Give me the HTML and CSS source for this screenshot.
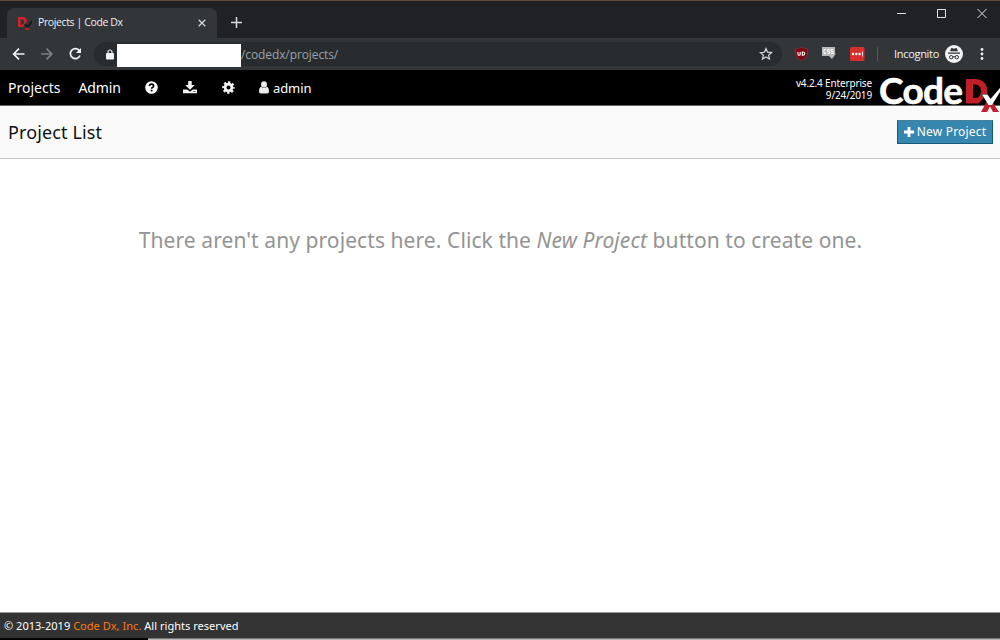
FILE: index.html
```
<!DOCTYPE html>
<html lang="en">
<head>
<meta charset="utf-8">
<title>Projects | Code Dx</title>
<link rel="stylesheet" href="styles.css">
</head>
<body>
<div class="window">
  <div class="tabstrip">
    <div class="tab">
      <svg class="favicon" width="14" height="14" viewBox="0 0 14 14"><path fill="#d2222c" fill-rule="evenodd" d="M0 0h4.500Q9 0 9 4.700L6.500 7.500 5 10H0zM2.500 2.300v5.400h1.500Q6.300 7.500 6.300 5T4 2.300z"/><path d="M7 7l2.500 3L14 4" fill="none" stroke="#17191b" stroke-width="2"/><path d="M6.500 13L9 10l3 3z" fill="#b91d26"/></svg>
      <span class="tab-title">Projects | Code Dx</span>
      <svg class="tab-close" width="8" height="8" viewBox="0 0 8 8"><path d="M.7.7l6.600 6.600M7.300.7L.7 7.300" stroke="#d5d7d9" stroke-width="1.300"/></svg>
    </div>
    <svg class="new-tab" width="11" height="11" viewBox="0 0 11 11"><path d="M5.500 0v11M0 5.500h11" stroke="#dadcde" stroke-width="1.500"/></svg>
    <svg class="window-controls" width="92" height="12" viewBox="0 0 92 12"><path d="M0 5.500h9M40.500 1.500h8v8h-8zM80.500 1l9 9M89.500 1l-9 9" fill="none" stroke="#e4e4e4"/></svg>
  </div>
  <div class="toolbar">
    <svg class="browser-nav" width="72" height="16" viewBox="0 0 72 16" fill="none" stroke-width="1.700"><path d="M12.500 8H2M7 2.700L1.700 8 7 13.300" stroke="#f1f3f4"/><path d="M29 8h10.500M34.500 2.700L39.800 8l-5.300 5.300" stroke="#7d8083"/><path d="M67.500 4.700A5 5 0 1 0 68 9.500" stroke="#f1f3f4"/><path d="M69 2v5h-5z" fill="#f1f3f4"/></svg>
    <div class="address">
      <svg class="lock" width="8" height="11" viewBox="0 0 8 11"><rect y="4" width="8" height="6.500" rx="1" fill="#f1f3f4"/><path d="M2 4.500V3a2 2 0 0 1 4 0v1.500" fill="none" stroke="#f1f3f4" stroke-width="1.200"/></svg>
      <span class="redacted"></span>
      <span class="url">/codedx/projects/</span>
      <svg class="star" width="14" height="14" viewBox="0 0 14 14"><path d="M7 1.500l1.600 3.700 4 .35-3 2.650.9 3.900L7 10l-3.500 2.100.9-3.900-3-2.650 4-.35z" fill="none" stroke="#d5d7d9" stroke-width="1.200"/></svg>
    </div>
    <svg class="ext-shield" width="13" height="14" viewBox="0 0 13 14"><path d="M6.500 0Q9 1.700 12.500 1.800V7q-.5 4-6 7Q1 11 .5 7V1.800Q4 1.700 6.500 0z" fill="#800610" stroke="#6d4a4e" stroke-width=".6"/><path d="M3 5v2.200q0 1 1.100 1t1.100-1V5M7.300 5v3.200h.8q1.700-.2 1.700-1.600T8.100 5z" fill="none" stroke="#fff" stroke-width="1.100"/></svg>
    <svg class="ext-css" width="14" height="13" viewBox="0 0 14 13"><path d="M0 0h13v6.500h1L10 12 7 9H0z" fill="#b9b9b9"/><path d="M4 2.600H2v3.800h2M7.800 2.600H5.700v1.900h2v1.900H5.500M11.300 2.600H9.200v1.900h2v1.900H9" fill="none" stroke="#fff"/></svg>
    <svg class="ext-pass" width="15" height="14" viewBox="0 0 15 14"><rect width="14.500" height="14" rx="1.500" fill="#d92f2c"/><g fill="#fff"><circle cx="3" cy="7" r="1.200"/><circle cx="6.300" cy="7" r="1.200"/><circle cx="9.600" cy="7" r="1.200"/><path d="M12 4.500h.8v5H12z"/></g></svg>
    <span class="divider"></span>
    <span class="incognito">Incognito</span>
    <svg class="incognito-icon" width="18" height="18" viewBox="0 0 18 18"><circle cx="9" cy="9" r="9" fill="#f1f3f4"/><path d="M6 3.500q.5-.7 1.500-.2.800.4 1.500.4t1.500-.4q1-.5 1.500.2l.9 2.800H5.100zM3 7.600h12v1.100H3z" fill="#303236"/><g fill="none" stroke="#303236"><circle cx="6.200" cy="12.200" r="1.700"/><circle cx="11.800" cy="12.200" r="1.700"/><path d="M8 12q1-.6 2 0"/></g></svg>
    <svg class="menu-dots" width="4" height="14" viewBox="0 0 4 14" fill="#f1f3f4"><circle cx="2" cy="2.500" r="1.400"/><circle cx="2" cy="7" r="1.400"/><circle cx="2" cy="11.500" r="1.400"/></svg>
  </div>
  <nav class="navbar">
    <span class="nav-link nav-projects">Projects</span>
    <span class="nav-link nav-admin">Admin</span>
    <svg class="nav-help" width="13" height="13" viewBox="0 0 13 13"><circle cx="6.500" cy="6.500" r="6.300" fill="#fff"/><path d="M4.400 5Q4.500 3.200 6.500 3.200T8.600 5Q8.600 6 7.500 6.500q-.9.400-.9 1.300M6.600 8.700v1.700" fill="none" stroke="#000" stroke-width="1.700"/></svg>
    <svg class="nav-download" width="14" height="13" viewBox="0 0 14 13" fill="#f4f4f4"><path d="M5.200 0h3.500v4h3L7 8.700 2.200 4h3z"/><path d="M0 8.500h4.200L7 10.700l2.800-2.200H14v3.800H0z"/><path d="M10 10.500h2.500" stroke="#555" stroke-width=".8"/></svg>
    <svg class="nav-gear" width="13" height="13" viewBox="0 0 13 13"><circle cx="6.500" cy="6.500" r="3.400" fill="none" stroke="#f4f4f4" stroke-width="2.800"/><circle cx="6.500" cy="6.500" r="5.300" fill="none" stroke="#f4f4f4" stroke-width="2" stroke-dasharray="2.360 1.803" stroke-dashoffset="1.180"/></svg>
    <svg class="nav-user" width="10" height="13" viewBox="0 0 11 13" preserveAspectRatio="none" fill="#eee"><circle cx="5.500" cy="3.400" r="3.200"/><path d="M2.500 5.700q3 2.400 6 0Q11 6.500 11 10.500q0 2-2 2H2q-2 0-2-2Q0 6.500 2.500 5.700z"/></svg>
    <span class="nav-link nav-account">admin</span>
    <div class="version"><div>v4.2.4 Enterprise</div><div>9/24/2019</div></div>
    <div class="brand">
      <span class="brand-code">Code</span>
      <svg class="brand-mark" width="34" height="36" viewBox="0 0 34 36"><path fill="#c01f29" fill-rule="evenodd" d="M0 2H10Q21 3 21.500 15v2h-6l2 4-5 5.500H0zM7 7.500V21h2q6-.5 6-6.800T9 7.500z"/><path fill="#c01f29" d="M20.500 25L15 35h6l3-5.500 3 5.500h6l-6-9z"/><path fill="#fff" d="M16 17.500h5.500l3 4.500L34 11v4l-8 13h-3.500z"/></svg>
    </div>
  </nav>
  <header class="page-header">
    <h1 class="page-title">Project List</h1>
    <div class="new-project"><svg class="plus" width="10" height="10" viewBox="0 0 10 10"><path d="M5 0v10M0 5h10" stroke="#fff" stroke-width="2.800"/></svg><span>New Project</span></div>
  </header>
  <main class="content"><p class="empty-message">There aren't any projects here. Click the <em>New Project</em> button to create one.</p></main>
  <footer class="footer">© 2013-2019 <span class="company">Code Dx, Inc.</span> All rights reserved</footer>
  <div class="desktop-edge"><span class="edge-dark"></span><span class="edge-light"></span></div>
</div>
</body>
</html>
```
FILE: styles.css
```
* { box-sizing: border-box; }
body { margin: 0; font-family: "Noto Sans", sans-serif; background: #fff; }
svg { display: block; flex: none; }
span { white-space: nowrap; }
.window { width: 1000px; height: 640px; display: flex; flex-direction: column; overflow: hidden; }
.tabstrip { height: 38px; flex: none; background: #202124; border-top: 1px solid #604531; display: flex; align-items: flex-start; padding-left: 7px; }
.tab { width: 210px; height: 30px; margin-top: 7px; padding: 0 11px 0 11px; background: #323639; border-radius: 7px 7px 0 0; display: flex; align-items: center; }
.tab-title { font: 10.500px/14px "Open Sans", sans-serif; color: #edf0f2; margin: -2px 0 0 6px; flex: 1; letter-spacing: -.38px; }
.favicon { margin-top: 1px; }
.new-tab { margin: 16px 0 0 14px; }
.window-controls { margin: 7px 11px 0 auto; }
.toolbar { height: 32px; flex: none; background: #323639; display: flex; align-items: center; padding-left: 12px; font-family: "Open Sans", sans-serif; }
.browser-nav { margin-top: -1px; }
.address { width: 688px; height: 24px; margin-left: 10px; padding-left: 12px; border-radius: 12px; background: #282c2f; display: flex; align-items: center; }
.redacted { width: 124px; height: 23px; margin: 2px 0 0 3px; background: #fff; flex: none; }
.url { font-size: 12px; line-height: 16px; color: #9aa0a6; letter-spacing: -.1px; margin-top: 1px; }
.star { margin: 0 9px 0 auto; }
.ext-shield { margin-left: 13px; }
.ext-css { margin: -2px 0 0 14px; }
.ext-pass { margin-left: 14px; }
.divider { width: 1px; height: 14px; margin-left: 12px; background: #55595c; }
.incognito { font-size: 11px; line-height: 16px; color: #f1f3f4; margin: -1px 0 0 16px; width: 52px; letter-spacing: -.3px; }
.incognito-icon { margin: -1px 0 0 -1px; }
.menu-dots { margin: -1px 0 0 17px; }
.navbar { height: 36px; flex: none; background: #000; border-bottom: 1px solid #656565; color: #fff; display: flex; align-items: center; padding-left: 8px; }
.nav-link { font-size: 14px; line-height: 20px; }
.nav-projects { width: 70.500px; }
.nav-admin { width: 66.500px; letter-spacing: -.1px; }
.nav-download { margin-left: 25px; }
.nav-gear { margin-left: 25px; }
.nav-user { margin-left: 24px; }
.nav-account { margin-left: 4px; font-size: 13px; letter-spacing: -.1px; }
.version { margin: 2px 6px 0 auto; font-size: 10px; line-height: 12px; letter-spacing: -.15px; text-align: right; }
.brand { width: 122px; height: 35px; display: flex; align-items: flex-start; position: relative; z-index: 1; }
.brand-code { width: 88px; font: 700 37px/35px Lato, sans-serif; letter-spacing: -.7px; -webkit-text-stroke: .6px #fff; padding: 2px 0 0 1px; flex: none; }
.brand-mark { margin-top: 7px; }
.page-header { height: 53px; flex: none; background: #fafafa; border-bottom: 1px solid #c8c8c8; display: flex; align-items: center; justify-content: space-between; padding: 0 7px 0 8px; }
.page-title { margin: 0; font-size: 18px; line-height: 26px; font-weight: 400; letter-spacing: .12px; color: #111; }
.new-project { width: 96px; height: 24px; margin-bottom: 1px; background: #3786af; border: 1px solid #145b7c; border-top-color: #487f99; color: #fff; font-size: 12px; letter-spacing: .18px; display: flex; align-items: center; justify-content: center; gap: 3px; }
.content { flex: 1; padding-top: 64px; }
.empty-message { margin: 0; padding-left: 1px; font-size: 21px; line-height: 34px; letter-spacing: .08px; text-align: center; white-space: nowrap; color: #949494; }
.footer { height: 26px; flex: none; background: #333; border-top: 1px solid #999; color: #fff; font-size: 11px; line-height: 25px; letter-spacing: .03px; padding-left: 4px; white-space: pre; }
.company { color: #ff780a; }
.desktop-edge { height: 2px; display: flex; flex: none; }
.edge-dark { width: 148px; background: #050505; }
.edge-light { flex: 1; background: #b9b9b9; border-top: 1px solid #777; }
```
